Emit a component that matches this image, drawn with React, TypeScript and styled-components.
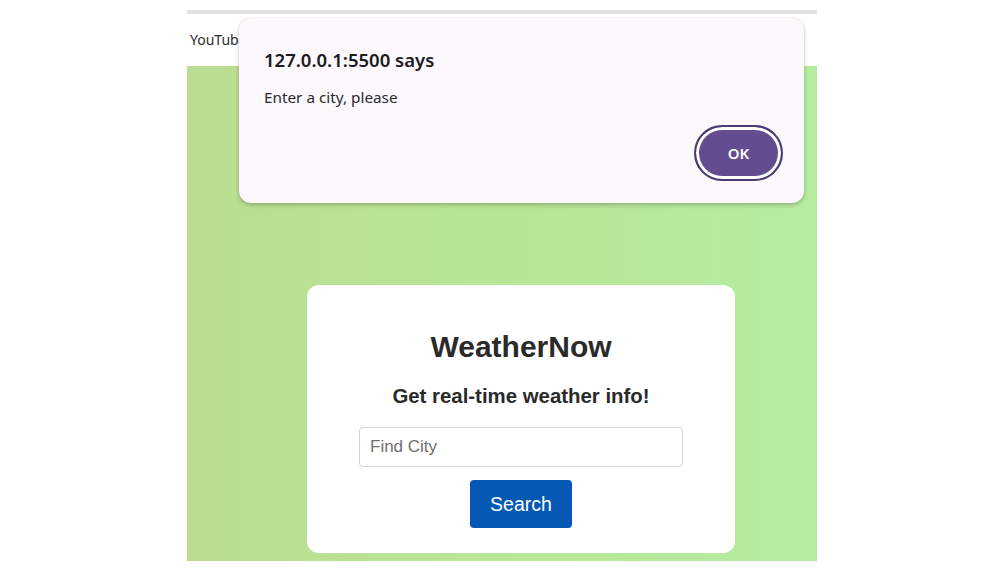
import React from "react";
import styled, { createGlobalStyle } from "styled-components";

const Global = createGlobalStyle`
  html, body { margin: 0; padding: 0; background: #ffffff; }
  body { width: 1000px; height: 574px; overflow: hidden; font-family: "Liberation Sans", Arial, sans-serif; }
  * { box-sizing: border-box; }
`;

const Stage = styled.div`
  position: relative;
  width: 1000px;
  height: 574px;
  padding-top: 10px;
  padding-left: 187px;
`;

const Browser = styled.div`
  width: 630px;
  display: flex;
  flex-direction: column;
`;

const TopRule = styled.div`
  height: 4px;
  background: #e2e2e2;
`;

const Bookmarks = styled.div`
  height: 52px;
  display: flex;
  align-items: center;
  padding-left: 3px;
  padding-bottom: 2px;
  font-family: "Noto Sans", "Open Sans", sans-serif;
  font-size: 14px;
  color: #2b2b2b;
`;

const Viewport = styled.div`
  height: 495px;
  background: linear-gradient(90deg, #bbdd91 0%, #b8e596 45%, #b5eca0 100%);
  display: flex;
  flex-direction: column;
  justify-content: flex-end;
  padding: 0 82px 8px 120px;
`;

const Card = styled.div`
  height: 268px;
  background: #ffffff;
  border-radius: 12px;
  display: flex;
  flex-direction: column;
  align-items: center;
  padding-top: 45px;
`;

const Title = styled.h1`
  margin: 0;
  font-size: 30px;
  font-weight: 700;
  color: #2a2a2a;
  line-height: 34px;
`;

const Subtitle = styled.h2`
  margin: 21px 0 0;
  font-size: 20.4px;
  font-weight: 700;
  color: #2a2a2a;
  line-height: 22px;
`;

const CityInput = styled.input`
  margin-top: 20px;
  width: 324px;
  height: 40px;
  border: 1px solid #d6d6d6;
  border-radius: 4px;
  padding: 0 10px;
  font-family: "Liberation Sans", Arial, sans-serif;
  font-size: 17px;
  color: #333;
  outline: none;
  &::placeholder { color: #6f6f6f; }
`;

const SearchButton = styled.button`
  margin-top: 13px;
  width: 102px;
  height: 48px;
  border: none;
  border-radius: 4px;
  background: #0558b4;
  color: #ffffff;
  font-family: "Liberation Sans", Arial, sans-serif;
  font-size: 19.5px;
  cursor: pointer;
`;

const Dialog = styled.div`
  position: absolute;
  left: 239px;
  top: 18px;
  width: 565px;
  height: 185px;
  background: #fdf8fc;
  border-radius: 12px;
  box-shadow: 0 2px 4px rgba(0,0,0,0.22), 0 0 1px rgba(0,0,0,0.15);
  padding: 30px 21px 0 25px;
  display: flex;
  flex-direction: column;
  font-family: "Noto Sans", "Open Sans", sans-serif;
`;

const DialogTitle = styled.div`
  font-size: 18.5px;
  font-weight: 600;
  color: #1c1b1f;
  line-height: 24px;
`;

const DialogMessage = styled.div`
  margin-top: 15px;
  font-size: 15.3px;
  color: #2b2a2e;
  line-height: 20px;
`;

const DialogActions = styled.div`
  margin-top: 18px;
  display: flex;
  justify-content: flex-end;
`;

const OkButton = styled.button`
  width: 89px;
  height: 56px;
  border-radius: 28px;
  border: 2px solid #4b3a73;
  background: #634c8f;
  box-shadow: inset 0 0 0 3px #ffffff;
  color: #ffffff;
  font-family: "Noto Sans", "Open Sans", sans-serif;
  font-size: 15px;
  font-weight: 600;
  cursor: pointer;
`;

export default function App() {
  return (
    <>
      <Global />
      <Stage>
        <Browser>
          <TopRule />
          <Bookmarks>YouTube</Bookmarks>
          <Viewport>
            <Card>
              <Title>WeatherNow</Title>
              <Subtitle>Get real-time weather info!</Subtitle>
              <CityInput placeholder="Find City" />
              <SearchButton>Search</SearchButton>
            </Card>
          </Viewport>
        </Browser>
        <Dialog>
          <DialogTitle>127.0.0.1:5500 says</DialogTitle>
          <DialogMessage>Enter a city, please</DialogMessage>
          <DialogActions>
            <OkButton>OK</OkButton>
          </DialogActions>
        </Dialog>
      </Stage>
    </>
  );
}
